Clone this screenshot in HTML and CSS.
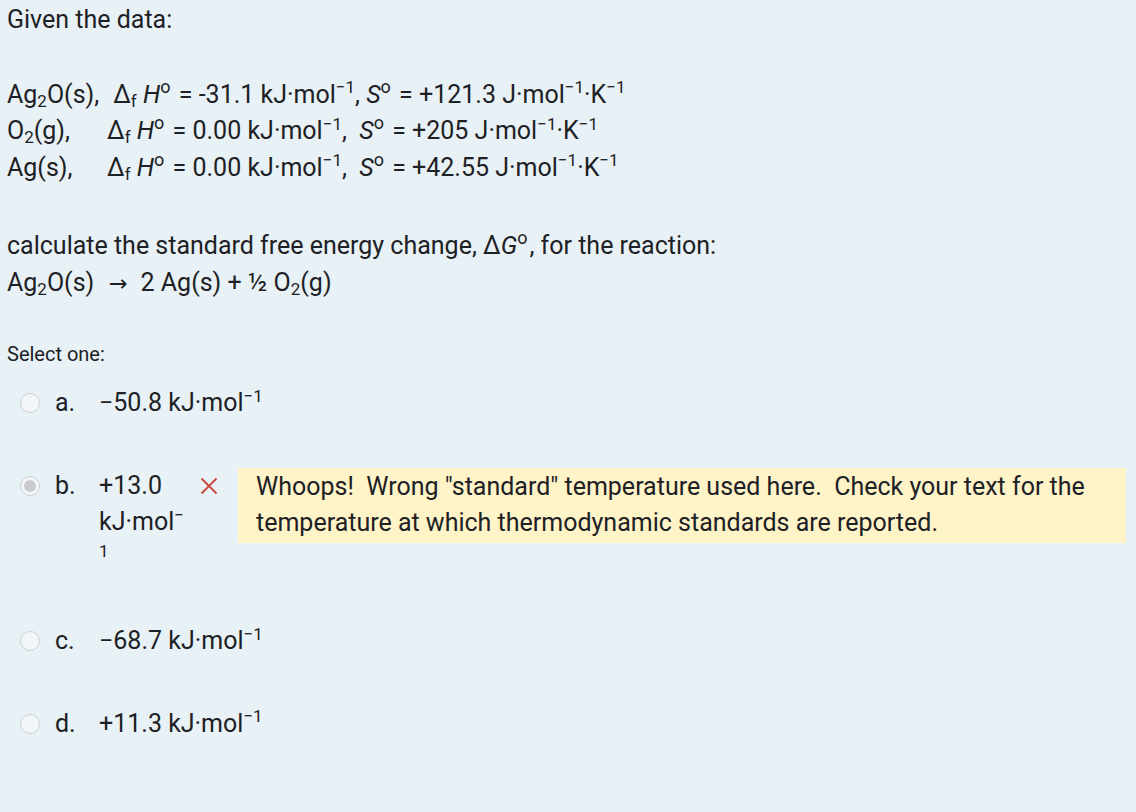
FILE: index.html
```html
<!DOCTYPE html>
<html lang="en">
<head>
<meta charset="utf-8">
<title>Question</title>
<link rel="stylesheet" href="styles.css">
</head>
<body>
<div class="question">
  <div class="qtext">
    <p class="para">Given the data:</p>
    <div class="para data">
      <div class="row"><span class="sp sp1">Ag<sub>2</sub>O(s),</span><span class="d">Δ<sub>f</sub></span> <i>H</i><sup class="deg">o</sup> = -31.1 kJ·mol<sup>−1</sup>,&nbsp;<i>S</i><sup class="deg">o</sup> = +121.3 J·mol<sup>−1</sup>·K<sup>−1</sup></div>
      <div class="row"><span class="sp">O<sub>2</sub>(g),</span><span class="d">Δ<sub>f</sub></span> <i>H</i><sup class="deg">o</sup> = 0.00 kJ·mol<sup>−1</sup>,&nbsp; <i>S</i><sup class="deg">o</sup> = +205 J·mol<sup>−1</sup>·K<sup>−1</sup></div>
      <div class="row"><span class="sp">Ag(s),</span><span class="d">Δ<sub>f</sub></span> <i>H</i><sup class="deg">o</sup> = 0.00 kJ·mol<sup>−1</sup>,&nbsp; <i>S</i><sup class="deg">o</sup> = +42.55 J·mol<sup>−1</sup>·K<sup>−1</sup></div>
    </div>
    <div class="para calc">
      <div class="row">calculate the standard free energy change, Δ<i>G</i><sup class="deg">o</sup>, for the reaction:</div>
      <div class="row">Ag<sub>2</sub>O(s) <span class="arrow">→</span> 2 Ag(s) + ½ O<sub>2</sub>(g)</div>
    </div>
  </div>
  <div class="prompt">Select one:</div>
  <div class="answers">
    <div class="opt">
      <span class="radio"></span>
      <span class="lbl">a.</span>
      <div class="ans">−50.8 kJ·mol<sup>−1</sup></div>
    </div>
    <div class="opt">
      <span class="radio checked"></span>
      <span class="lbl">b.</span>
      <div class="ans narrow">+13.0 kJ·mol<sup>−<wbr>1</sup></div>
      <svg class="xicon" width="18" height="18" viewBox="0 0 18 18" aria-hidden="true"><path d="M1.5 1.5 L16.5 16.5 M16.5 1.5 L1.5 16.5" stroke="#c8473b" stroke-width="1.8" fill="none"/></svg>
      <div class="feedback">Whoops!&nbsp; Wrong "standard" temperature used here.&nbsp; Check your text for the temperature at which thermodynamic standards are reported.</div>
    </div>
    <div class="opt">
      <span class="radio"></span>
      <span class="lbl">c.</span>
      <div class="ans">−68.7 kJ·mol<sup>−1</sup></div>
    </div>
    <div class="opt">
      <span class="radio"></span>
      <span class="lbl">d.</span>
      <div class="ans">+11.3 kJ·mol<sup>−1</sup></div>
    </div>
  </div>
</div>
</body>
</html>
```

FILE: styles.css
```css
html, body {
  margin: 0;
  padding: 0;
  background: #e8f1f5;
}
body {
  font-family: Roboto, "Liberation Sans", sans-serif;
  font-size: 25px;
  line-height: 36.5px;
  color: #1d2125;
}
.question {
  padding: 2px 10px 0 7px;
}
.para {
  margin: 0 0 38px 0;
}
.data {
  margin-bottom: 42px;
}
.calc {
  margin-bottom: 38px;
}
.sp {
  display: inline-block;
  width: 100px;
}
.sp1 {
  width: auto;
  margin-right: 14px;
}
sup, sub {
  font-size: 0.68em;
  line-height: 0;
  position: relative;
  vertical-align: baseline;
}
sup {
  top: -0.55em;
}
sub {
  top: 0.25em;
}
sup.deg {
  font-size: 0.72em;
  top: -0.55em;
  margin: 0 2px 0 0;
}
.arrow {
  display: inline-block;
  padding: 0 7px 0 8px;
  font-family: "DejaVu Sans", sans-serif;
  font-size: 0.9em;
  line-height: 1;
}
i {
  font-style: italic;
}
.prompt {
  font-size: 20px;
  line-height: 30px;
  margin-bottom: 16px;
}
.answers {
  display: flex;
  flex-direction: column;
  gap: 46px;
}
.opt {
  display: flex;
  align-items: flex-start;
}
.radio {
  flex: none;
  width: 18px;
  height: 18px;
  border: 1.5px solid #cdd0d2;
  border-radius: 50%;
  background: #f3f6f8;
  margin: 8px 15px 0 13px;
  position: relative;
}
.radio.checked::after {
  content: "";
  position: absolute;
  left: 3px;
  top: 3px;
  width: 12px;
  height: 12px;
  border-radius: 50%;
  background: #c9cbcd;
}
.lbl {
  flex: none;
  width: 44px;
}
.ans.narrow {
  width: 94px;
  flex: none;
}
.xicon {
  flex: none;
  margin: 9px 20px 0 7px;
}
.feedback {
  flex: 1;
  background: #fff3c8;
  padding: 1px 18px;
}
```
